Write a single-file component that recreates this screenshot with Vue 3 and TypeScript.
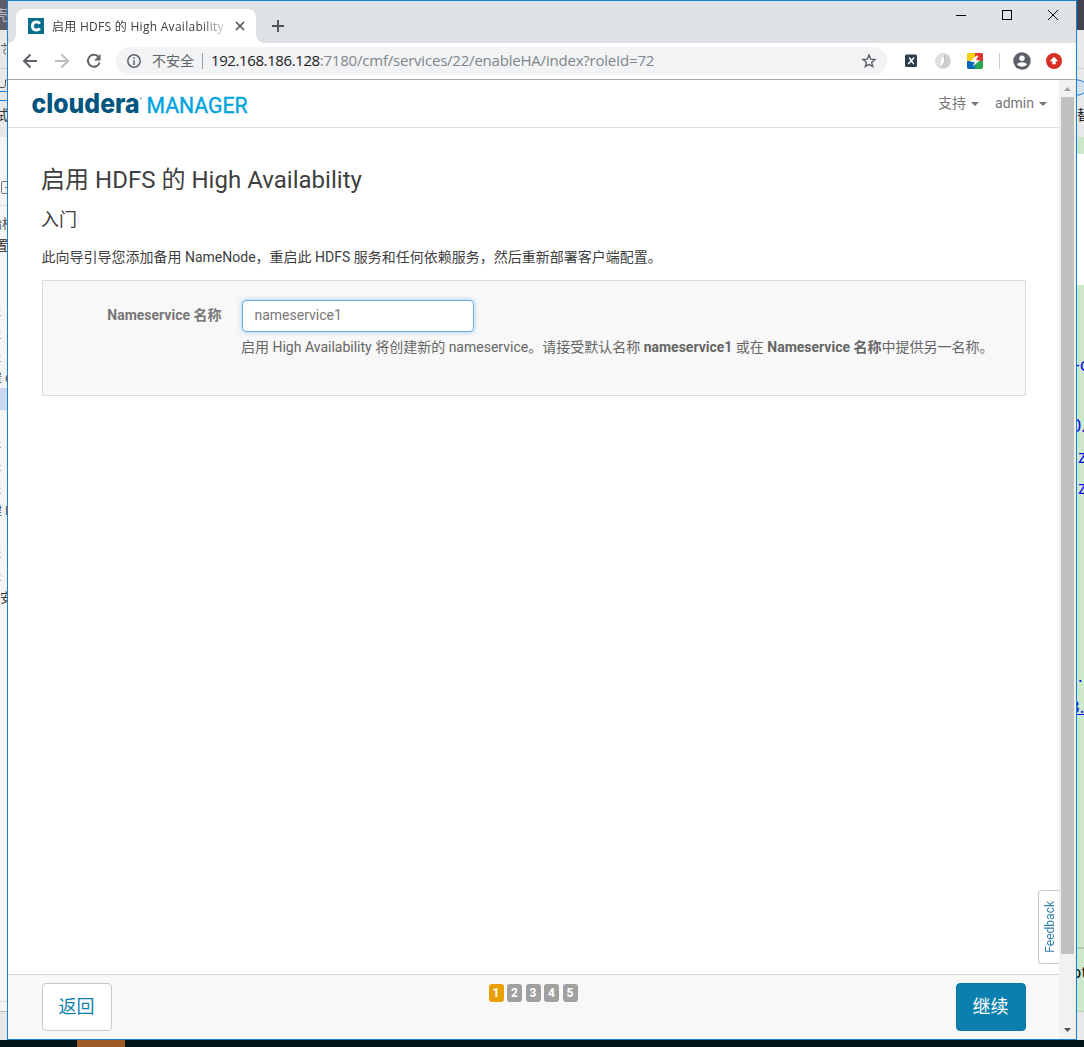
<script setup lang="ts">
import { ref } from 'vue'

interface Fragment {
  text: string
  x: number
  y: number
  size: number
  color: string
  underline?: boolean
}

const nameservice = ref('nameservice1')
const currentStep = ref(1)
const steps = [1, 2, 3, 4, 5]

const leftFragments: Fragment[] = [
  { text: '壳', x: -6, y: 6, size: 14, color: '#b5b6bf' },
  { text: '试', x: -6, y: 106, size: 14, color: '#333' },
  { text: '始校', x: -11, y: 214, size: 13, color: '#555' },
  { text: '置', x: -5, y: 236, size: 13, color: '#322' },
  { text: '崔 C', x: -10, y: 370, size: 12, color: '#443c3c' },
  { text: '建 E', x: -10, y: 502, size: 12, color: '#443c3c' },
  { text: '面安', x: -13, y: 588, size: 13, color: '#443c3c' },
]

const leftTicks = [309, 332, 355, 441, 464, 487, 551, 574]

const rightFragments: Fragment[] = [
  { text: '替', x: 0, y: 106, size: 14, color: '#222' },
  { text: '-c', x: -3, y: 355, size: 18, color: '#1010e8' },
  { text: '0.', x: -6, y: 416, size: 18, color: '#1010e8' },
  { text: 'z', x: 1, y: 447, size: 18, color: '#1010e8' },
  { text: 'z', x: 1, y: 478, size: 18, color: '#1010e8' },
  { text: '.', x: 1, y: 667, size: 17, color: '#1010e8' },
  { text: '3.', x: -7, y: 698, size: 17, color: '#1010e8', underline: true },
  { text: 'pt', x: -6, y: 963, size: 17, color: '#111' },
]

function fragmentStyle(f: Fragment) {
  return {
    left: f.x + 'px',
    top: f.y + 'px',
    fontSize: f.size + 'px',
    color: f.color,
    textDecoration: f.underline ? 'underline' : 'none',
  }
}
</script>

<template>
  <div class="desktop">
    <div class="behind behind-left">
      <div class="dark"></div>
      <div class="ribbon"></div>
      <div class="pane"></div>
      <div class="status"></div>
      <svg class="marks" width="7" height="200" viewBox="0 0 7 200" fill="none" stroke="#555">
        <path d="M1 45.500h5M4 43l2 2.500-2 2M6 49c-3 0-3 5 0 5M0 87.500h4q1.500 0 1.500-4V80h1.500" />
        <path d="M0 68.500h7" stroke="#ccc" />
        <path d="M0 91.500h7M0 100.500h7" stroke="#1b7fd0" />
        <path d="M7 181.500H3q-1.500 0-1.500 1.500v9q0 1.500 1.500 1.500h4M5 187.500h2" stroke="#777" />
      </svg>
      <div class="selected"></div>
      <i v-for="t in leftTicks" :key="t" class="tick" :style="{ top: t + 'px' }"></i>
      <span v-for="(f, i) in leftFragments" :key="i" class="fragment" :style="fragmentStyle(f)">{{ f.text }}</span>
    </div>
    <div class="behind behind-right">
      <div class="dark"></div>
      <div class="ribbon"></div>
      <div class="green-top"></div>
      <div class="blank"></div>
      <div class="green"></div>
      <div class="status"></div>
      <svg class="marks" width="7" height="110" viewBox="0 0 7 110">
        <path d="M0 68.500h7" stroke="#d0d0d0" />
        <path d="M-3 79.500q8 0 13 5v6q-5 5-13 5z" fill="#d4dff0" stroke="#1b7fd0" />
      </svg>
      <span v-for="(f, i) in rightFragments" :key="i" class="fragment" :style="fragmentStyle(f)">{{ f.text }}</span>
    </div>
    <div class="taskbar"><span></span></div>

    <div class="window">
      <div class="tabstrip">
        <div class="tab">
          <svg class="favicon" width="16" height="16" viewBox="0 0 16 16">
            <rect width="16" height="16" fill="#04708c" />
            <path d="M11.800 5.600Q10.500 3.900 8.300 3.900 4.400 4.200 4.400 8t3.900 4.100q2.200 0 3.500-1.700" fill="none" stroke="#fff" stroke-width="2.900" />
          </svg>
          <span class="tab-title">启用 HDFS 的 High Availability</span>
          <svg class="tab-close" width="10" height="10" viewBox="0 0 10 10"><path d="M1 1l8 8M9 1L1 9" stroke="#4b4e52" stroke-width="1.600" /></svg>
        </div>
        <svg class="new-tab" width="14" height="14" viewBox="0 0 14 14"><path d="M7 1v12M1 7h12" stroke="#505357" stroke-width="1.900" /></svg>
        <svg class="controls" width="104" height="14" viewBox="0 0 104 14" fill="none" stroke="#000">
          <path d="M2 7.500h10M94 2l10 10M104 2L94 12" />
          <rect x="48.500" y="2.500" width="9" height="9" />
        </svg>
      </div>

      <div class="toolbar">
        <svg class="nav" width="80" height="18" viewBox="0 0 80 18" fill="none" stroke-width="2">
          <path d="M15 9H2.500M8.500 2.500L2 9l6.500 6.500" stroke="#5f6368" />
          <path d="M33 9h12.500M39.500 2.500L46 9l-6.500 6.500" stroke="#babcbe" />
          <path d="M76.200 4.500A6 6 0 1 0 77.700 10.500" stroke="#5f6368" />
          <path d="M78.500 2v6.500H72z" fill="#5f6368" />
        </svg>
        <div class="omnibox">
          <svg width="14" height="14" viewBox="0 0 14 14" fill="none" stroke="#5f6368" stroke-width="1.500">
            <circle cx="7" cy="7" r="6.200" /><path d="M7 6.300V11M7 3.200v1.700" />
          </svg>
          <span class="insecure">不安全</span>
          <i class="sep"></i>
          <span class="url"><b>192.168.186.128</b><span class="path">:7180/cmf/services/22/enableHA/index?roleId=72</span></span>
          <svg class="star" width="16" height="16" viewBox="0 0 16 16"><path d="M8 2l1.650 4.100 4.350.35-3.350 2.850 1.050 4.300L8 11.300l-3.700 2.300 1.050-4.300L2 6.450l4.350-.35z" fill="none" stroke="#5a5d62" stroke-width="1.400" /></svg>
        </div>
        <svg class="ext ext-x" width="14" height="14" viewBox="0 0 14 14">
          <rect x="1" y=".5" width="12" height="12.500" rx="1.500" fill="#2a3d4a" />
          <path d="M5.200 3.500l4.500 6.500M10.200 3.500l-6 6.500" stroke="#fff" stroke-width="1.400" />
        </svg>
        <svg class="ext ext-ring" width="16" height="16" viewBox="0 0 16 16">
          <circle cx="8" cy="8" r="7.800" fill="#cfcfcf" />
          <path d="M8 0A8 8 0 0 0 5 15l2-3Q4 8 9 3z" fill="#e0e0e0" />
          <path d="M9 3.500q-5 3-2.500 9 5-2.500 2.500-9z" fill="#fff" />
          <path d="M7.500 12.500q4-4 2-9" fill="none" stroke="#b5b5b5" />
        </svg>
        <svg class="ext ext-bolt" width="16" height="16" viewBox="0 0 16 16">
          <rect width="16" height="16" rx="2" fill="#2aa550" />
          <path d="M2 0h6v8H0V2q0-2 2-2z" fill="#f7cf17" />
          <path d="M8 0h6q2 0 2 2v6H8z" fill="#e4322c" />
          <path d="M0 8h8v8H2q-2 0-2-2z" fill="#0b67b8" />
          <path d="M9.500 2.500L3 8.800l4.700.2-2 4.500L13 7.300 9 7l2.500-4z" fill="#fff" />
        </svg>
        <i class="tool-sep"></i>
        <svg class="avatar" width="18" height="18" viewBox="0 0 18 18">
          <circle cx="9" cy="9" r="8.700" fill="#5b5f66" />
          <circle cx="9" cy="6.200" r="2.700" fill="#fff" />
          <path d="M3.800 12.300Q5.500 10.300 9 10.300t5.200 2Q12.500 14.700 9 14.700t-5.200-2.400z" fill="#fff" />
        </svg>
        <svg class="update" width="16" height="16" viewBox="0 0 16 16">
          <circle cx="8" cy="8" r="8" fill="#d93025" />
          <path d="M8 3.800L3.800 8.200h2.500v3h3.400v-3h2.500z" fill="#fff" />
        </svg>
      </div>

      <div class="viewport">
        <div class="page">
          <header>
            <svg class="logo" width="220" height="28" viewBox="0 0 220 28">
              <text class="brand" x=".5" y="23.500" textLength="108" lengthAdjust="spacingAndGlyphs">cloudera</text>
              <circle cx="110" cy="9.500" r="1" fill="#7da7bf" />
              <text class="product" x="115.500" y="23.500" textLength="101" lengthAdjust="spacingAndGlyphs">MANAGER</text>
            </svg>
            <nav>
              <a>支持<i></i></a>
              <a>admin<i></i></a>
            </nav>
          </header>
          <main>
            <h1>启用 HDFS 的 High Availability</h1>
            <h2>入门</h2>
            <p class="intro">此向导引导您添加备用 NameNode，重启此 HDFS 服务和任何依赖服务，然后重新部署客户端配置。</p>
            <section class="well">
              <label for="ns">Nameservice 名称</label>
              <div class="field">
                <input id="ns" v-model="nameservice" type="text" spellcheck="false" />
                <p>启用 High Availability 将创建新的 nameservice。请接受默认名称 <b>nameservice1</b> 或在 <b>Nameservice 名称</b>中提供另一名称。</p>
              </div>
            </section>
          </main>
          <footer>
            <button class="back">返回</button>
            <div class="steps">
              <span v-for="s in steps" :key="s" :class="{ active: s === currentStep }">{{ s }}</span>
            </div>
            <button class="next">继续</button>
          </footer>
          <div class="feedback"><span>Feedback</span></div>
        </div>
        <div class="scrollbar">
          <svg width="17" height="17" viewBox="0 0 17 17"><path d="M8.500 7L12 11H5z" fill="#a0a0a0" /></svg>
          <div class="thumb"></div>
          <svg width="17" height="17" viewBox="0 0 17 17"><path d="M5 6h7l-3.500 4z" fill="#505050" /></svg>
        </div>
      </div>
    </div>
  </div>
</template>

<style>
body {
  margin: 0;
  overflow: hidden;
}
</style>

<style scoped>
* { box-sizing: border-box; }
svg { display: block; flex: none; }
.desktop {
  position: relative;
  width: 1084px;
  height: 1047px;
  overflow: hidden;
  background: #f4f4f4;
  font-family: Roboto, "Noto Sans CJK SC", sans-serif;
}
.behind { position: absolute; top: 0; height: 1040px; width: 7px; overflow: hidden; }
.behind-left { left: 0; background: #f5f5f5; }
.behind-right { left: 1077px; background: #fff; }
.behind > * { position: absolute; left: 0; }
.dark { top: 0; width: 7px; height: 30px; background: #42434f; }
.behind-left .dark { background: #5c5d68; }
.ribbon { top: 30px; width: 7px; height: 107px; background: #e8e8e8; }
.behind-left .pane { top: 205px; width: 7px; height: 797px; border: solid #dedede; border-width: 1px 0; }
.behind-left .status { top: 1011px; width: 7px; height: 29px; background: #e8e8e8; border-top: 1px solid #bbb; }
.green-top { top: 137px; width: 7px; height: 17px; background: #cce8cb; }
.blank { top: 154px; width: 7px; height: 131px; background: #fff; }
.green { top: 285px; width: 7px; height: 726px; background: #cee8cc; }
.green::after { content: ""; display: block; margin-top: 662px; height: 2px; background: #b3cdb2; }
.behind-right .status { top: 1011px; width: 7px; height: 29px; background: #e8e8e8; border-top: 1px solid #c6c6c6; }
.marks { top: 0; }
.selected { top: 388px; width: 7px; height: 22px; background: #c9d7f1; }
.tick { width: 1px; height: 7px; border-bottom: 1px solid #999; border-top: 2px solid #ddd; }
.fragment { white-space: nowrap; line-height: 20px; font-family: "Noto Sans", "Noto Sans CJK SC", sans-serif; margin-top: -1px; }
.taskbar { position: absolute; left: 0; top: 1040px; width: 1084px; height: 7px; background: #03161b; }
.taskbar span { display: block; margin-left: 77px; width: 48px; height: 7px; background: #9d5b26; }

.window {
  position: absolute;
  left: 7px;
  top: 0;
  width: 1070px;
  height: 1040px;
  border: 1px solid #1a80d2;
  background: #fff;
  display: flex;
  flex-direction: column;
}
.tabstrip { height: 42px; background: #dee1e6; display: flex; padding: 8px 0 0 8px; flex: none; position: relative; }
.tab {
  width: 240px; height: 34px; background: #fff; border-radius: 8px 8px 0 0;
  display: flex; align-items: center; padding: 0 11px 0 12px; position: relative;
}
.tab::before, .tab::after { content: ""; position: absolute; bottom: 0; width: 8px; height: 8px; }
.tab::before { left: -8px; background: radial-gradient(circle at 0 0, transparent 7.500px, #fff 8px); }
.tab::after { right: -8px; background: radial-gradient(circle at 100% 0, transparent 7.500px, #fff 8px); }
.tab-title {
  width: 176px; margin-left: 8px; overflow: hidden; white-space: nowrap;
  font: 12px/20px "Open Sans", "Noto Sans CJK SC", sans-serif; color: #3c4043;
  letter-spacing: .28px; padding-top: 1px;
  -webkit-mask-image: linear-gradient(90deg, #000 150px, transparent 178px);
  mask-image: linear-gradient(90deg, #000 150px, transparent 178px);
}
.tab-close { margin-left: 7px; }
.new-tab { margin: 10px 0 0 15px; }
.controls { margin: -1px 18px 0 auto; }

.toolbar { height: 37px; border-bottom: 1px solid #a9a9a9; display: flex; align-items: center; flex: none; padding-left: 14px; }
.omnibox {
  width: 771px; height: 28px; border-radius: 14px; background: #f1f3f4; margin-left: 14px;
  display: flex; align-items: center; padding: 0 10px 0 11px;
  font: 14px/20px "Open Sans", "Noto Sans CJK SC", sans-serif; color: #80868b;
}
.insecure { margin-left: 11px; color: #5f6368; width: 43px; }
.sep { width: 1px; height: 16px; background: #9aa0a6; margin: 0 8px 0 7px; }
.url { white-space: nowrap; font-size: 15px; letter-spacing: -.21px; padding-bottom: 2px; }
.url b { font-weight: 400; color: #202124; letter-spacing: -.4px; }
.star { margin-left: auto; }
.ext-x { margin-left: 17px; }
.ext-ring { margin-left: 17px; }
.ext-bolt { margin-left: 16px; }
.tool-sep { width: 1px; height: 16px; background: #ccc; margin-left: 16px; }
.avatar { margin-left: 13px; }
.update { margin-left: 15px; }

.viewport { flex: 1; display: flex; min-height: 0; }
.page { flex: 1; position: relative; display: flex; flex-direction: column; min-width: 0; }
header { height: 48px; border-bottom: 1px solid #dcdcdc; display: flex; align-items: flex-start; padding-left: 23px; flex: none; }
.logo { margin-top: 9px; }
.brand { font: 800 27px Inter, sans-serif; fill: #00557f; }
.product { font: 400 22px Roboto, sans-serif; fill: #00a4df; stroke: #00a4df; stroke-width: .4px; }
nav { margin-left: auto; display: flex; padding: 13px 12px 0 0; font-size: 14px; line-height: 20px; color: #777; }
nav a { display: flex; align-items: center; margin-left: 16px; height: 20px; }
nav i { border: 4px solid transparent; border-top-color: #777; border-bottom: 0; margin-left: 5px; margin-top: 2px; }
main { flex: 1; padding: 36px 33px 0; color: #404040; }
h1 { font-size: 24px; line-height: 32px; font-weight: 400; margin: 0; letter-spacing: .02px; }
h2 { font-size: 18px; line-height: 24px; font-weight: 400; margin: 12px 0 0; }
.intro { font-size: 14px; line-height: 20px; margin: 15px 0 0; white-space: nowrap; padding-left: .5px; }
.well { margin: 13px 0 0 1px; height: 116px; background: #f8f8f8; border: 1px solid #dadada; display: flex; padding-top: 19px; color: #666; font-size: 14px; line-height: 20px; }
label { width: 178.500px; text-align: right; font-weight: 700; color: #777; padding-top: 5px; }
.field { margin-left: 19.500px; white-space: nowrap; }
input {
  display: block; width: 232px; height: 32px; margin-left: 1px; border: 1px solid #66afe9; border-radius: 4px; background: #fff;
  box-shadow: 0 0 5px rgba(102, 175, 233, .6); padding: 0 12px 2px 11.500px; outline: 0; font: 14px Roboto, sans-serif; color: #777;
}
.field p { margin: 5px 0 0; }
footer { height: 65px; flex: none; background: #f8f8f8; border-top: 1px solid #d9d9d9; display: flex; justify-content: space-between; padding: 8px 33px 0 34px; }
button { width: 70px; height: 48px; border-radius: 4px; font: 18px/24px Roboto, "Noto Sans CJK SC", sans-serif; padding: 0 1px 0 0; }
.back { background: #fff; border: 1px solid #c8c8c8; color: #0b7fad; }
.next { background: #0b7fad; border: 1px solid #0a76a1; color: #fff; }
.steps { display: flex; gap: 3.500px; padding: 1px 2px 0 0; }
.steps span { width: 15px; height: 18px; border-radius: 3px; background: #a0a0a0; color: #fff; font-weight: 700; font-size: 12px; line-height: 18px; text-align: center; }
.steps .active { background: #e99f00; }
.feedback {
  position: absolute; right: 0; top: 810px; width: 21px; height: 74px; border: 1px solid #c8c8c8; border-right: 0;
  border-radius: 4px 0 0 4px; background: #fff; display: flex; align-items: center; justify-content: center; padding-left: 2px;
}
.feedback span { writing-mode: vertical-rl; transform: rotate(180deg); font: 12px/14px Roboto, sans-serif; color: #337fab; }
.scrollbar { width: 17px; background: #f1f1f1; display: flex; flex-direction: column; flex: none; }
.thumb { width: 13px; height: 857px; margin: 0 0 auto 2px; background: #c1c1c1; }
</style>
